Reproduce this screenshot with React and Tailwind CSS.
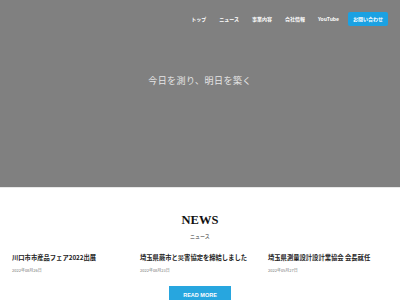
export default function App() {
  const news = [
    { t: "川口市市産品フェア2022出展", d: "2022年08月26日" },
    { t: "埼玉県蕨市と災害協定を締結しました", d: "2022年08月23日" },
    { t: "埼玉県測量設計設計業協会 会長就任", d: "2022年05月27日" },
  ];
  return (
    <div className="w-[400px] h-[300px] overflow-hidden bg-white" style={{ fontFamily: '"Noto Sans CJK JP", "Noto Sans", sans-serif' }}>
      <div className="h-[187px] bg-[#808080] flex flex-col">
        <nav className="flex items-center justify-end h-[38px] pr-[12px] gap-[13px]">
          {["トップ", "ニュース", "事業内容", "会社情報", "YouTube"].map((n) => (
            <span key={n} className="text-white text-[5px] font-bold">{n}</span>
          ))}
          <span className="bg-[#1ba1e2] text-white text-[5px] font-bold px-[5px] h-[14px] flex items-center rounded-[2px] ml-[-4px]">お問い合わせ</span>
        </nav>
        <div className="flex justify-center mt-[36px]">
          <span className="text-[#e6e6e6] text-[9px] tracking-[0.05em]">今日を測り、明日を築く</span>
        </div>
      </div>
      <div className="h-[1px] bg-[#e8e8e8]" />
      <div className="flex flex-col items-center pt-[26px]">
        <h2 className="text-[12.5px] font-bold text-[#111] leading-none" style={{ fontFamily: '"Liberation Serif", serif' }}>NEWS</h2>
        <span className="text-[5px] text-[#333] mt-[6px] leading-none">ニュース</span>
      </div>
      <div className="flex px-[12px] mt-[17px]">
        {news.map((n) => (
          <div key={n.t} className="flex flex-col w-[128px] shrink-0">
            <span className="text-[6.3px] font-bold text-[#222] leading-none whitespace-nowrap">{n.t}</span>
            <span className="text-[4px] text-[#777] mt-[7px] leading-none">{n.d}</span>
          </div>
        ))}
      </div>
      <div className="flex justify-center mt-[14px]">
        <div className="w-[62px] h-[18px] bg-[#27a6df] text-white text-[5.5px] font-bold flex items-center justify-center" style={{ fontFamily: '"Liberation Sans", sans-serif' }}>READ MORE</div>
      </div>
    </div>
  );
}
